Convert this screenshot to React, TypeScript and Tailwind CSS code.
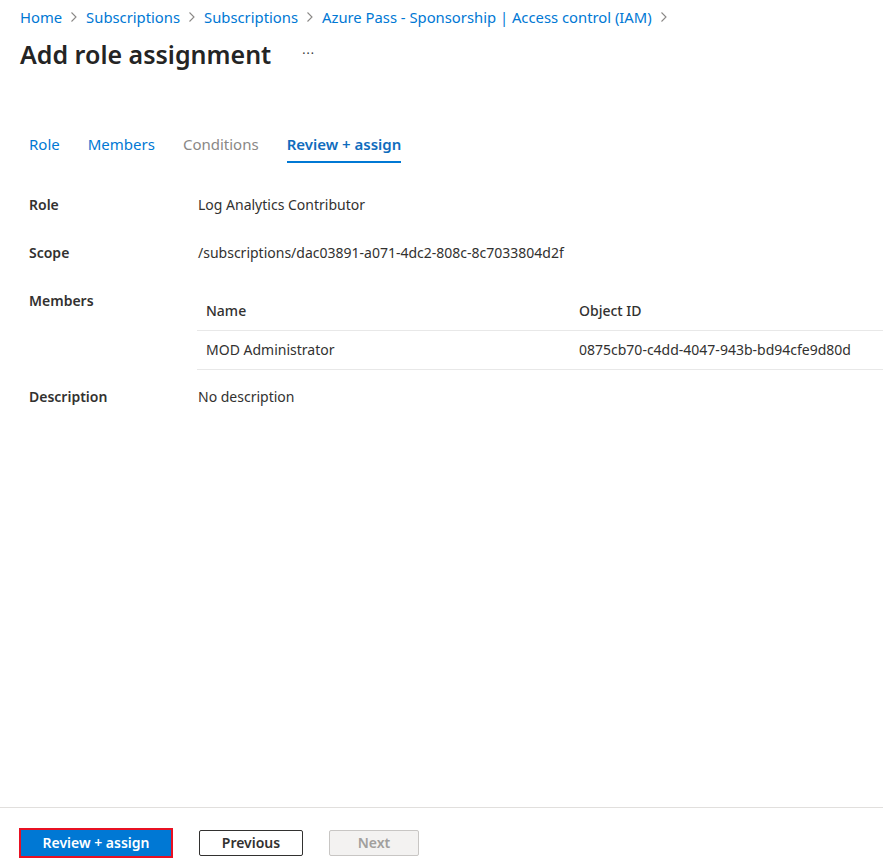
import React from 'react';

const crumbs = ['Home', 'Subscriptions', 'Subscriptions', 'Azure Pass - Sponsorship | Access control (IAM)'];

const Chevron = () => (
  <svg width="8" height="12" viewBox="0 0 8 12" className="mx-[8px]">
    <path d="M1.5 1.5 L6 6 L1.5 10.5" fill="none" stroke="#8a8886" strokeWidth="1.1" />
  </svg>
);

const tabs = [
  { label: 'Role', state: 'link' },
  { label: 'Members', state: 'link' },
  { label: 'Conditions', state: 'off' },
  { label: 'Review + assign', state: 'active' },
];

const Row: React.FC<{ label: string; children: React.ReactNode; className?: string }> = ({ label, children, className }) => (
  <div className={`flex ${className ?? ''}`}>
    <div className="w-[169px] shrink-0 font-semibold">{label}</div>
    <div className="flex-1">{children}</div>
  </div>
);

export default function App() {
  return (
    <div className="h-screen flex flex-col bg-white text-[14px] text-[#323130] font-['Noto_Sans','Open_Sans',sans-serif]">
      <div className="flex-1 overflow-hidden">
        <nav className="flex items-center pl-5 pt-[6px] h-[22px] box-content">
          {crumbs.map((c, i) => (
            <React.Fragment key={i}>
              <a className="text-[#0078d4] text-[14.8px] leading-[22px] whitespace-nowrap">{c}</a>
              <Chevron />
            </React.Fragment>
          ))}
        </nav>

        <div className="flex items-center pl-5 mt-[10px] h-[32px]">
          <h1 className="text-[25px] font-semibold leading-[32px] text-[#242424]">Add role assignment</h1>
          <span className="ml-[31px] text-[12px] tracking-[1px] text-[#323130] leading-none">···</span>
        </div>

        <div className="flex gap-[28px] pl-[29px] mt-[62px]">
          {tabs.map(t => (
            <div key={t.label} className="flex flex-col">
              <span
                className={`text-[15px] leading-[24px] ${
                  t.state === 'active'
                    ? 'text-[#0f6cbd] font-semibold'
                    : t.state === 'off'
                    ? 'text-[#8a8886]'
                    : 'text-[#0078d4]'
                }`}
              >
                {t.label}
              </span>
              <div className={`mt-[5px] h-[2px] ${t.state === 'active' ? 'bg-[#0078d4]' : 'bg-transparent'}`} />
            </div>
          ))}
        </div>

        <div className="pl-[29px] mt-[32px] flex flex-col">
          <Row label="Role" className="leading-[20px]">Log Analytics Contributor</Row>
          <Row label="Scope" className="leading-[20px] mt-[28px]">/subscriptions/dac03891-a071-4dc2-808c-8c7033804d2f</Row>
          <Row label="Members" className="leading-[20px] mt-[28px]">
            <div className="-ml-px">
              <div className="flex h-[40px] items-center border-b border-[#e8e8e8]">
                <div className="w-[382px] pl-[9px] font-medium">Name</div>
                <div className="font-medium">Object ID</div>
              </div>
              <div className="flex h-[39px] items-center border-b border-[#e8e8e8]">
                <div className="w-[382px] pl-[9px]">MOD Administrator</div>
                <div>0875cb70-c4dd-4047-943b-bd94cfe9d80d</div>
              </div>
            </div>
          </Row>
          <Row label="Description" className="leading-[20px] mt-[17px]">No description</Row>
        </div>
      </div>

      <div className="border-t border-[#e1dfdd] h-[58px] flex items-start pt-[20px] pl-[19px]">
        <div className="border-2 border-[#e81123]">
          <button className="block w-[150px] h-[26px] bg-[#0078d4] text-white font-semibold leading-[26px]">
            Review + assign
          </button>
        </div>
        <button className="mt-[2px] ml-[26px] w-[104px] h-[26px] border border-[#323130] rounded-[2px] font-semibold text-[#323130] leading-[24px]">
          Previous
        </button>
        <button className="mt-[2px] ml-[26px] w-[90px] h-[26px] border border-[#c8c6c4] rounded-[2px] bg-[#f3f2f1] font-semibold text-[#a19f9d] leading-[24px]">
          Next
        </button>
      </div>
    </div>
  );
}
